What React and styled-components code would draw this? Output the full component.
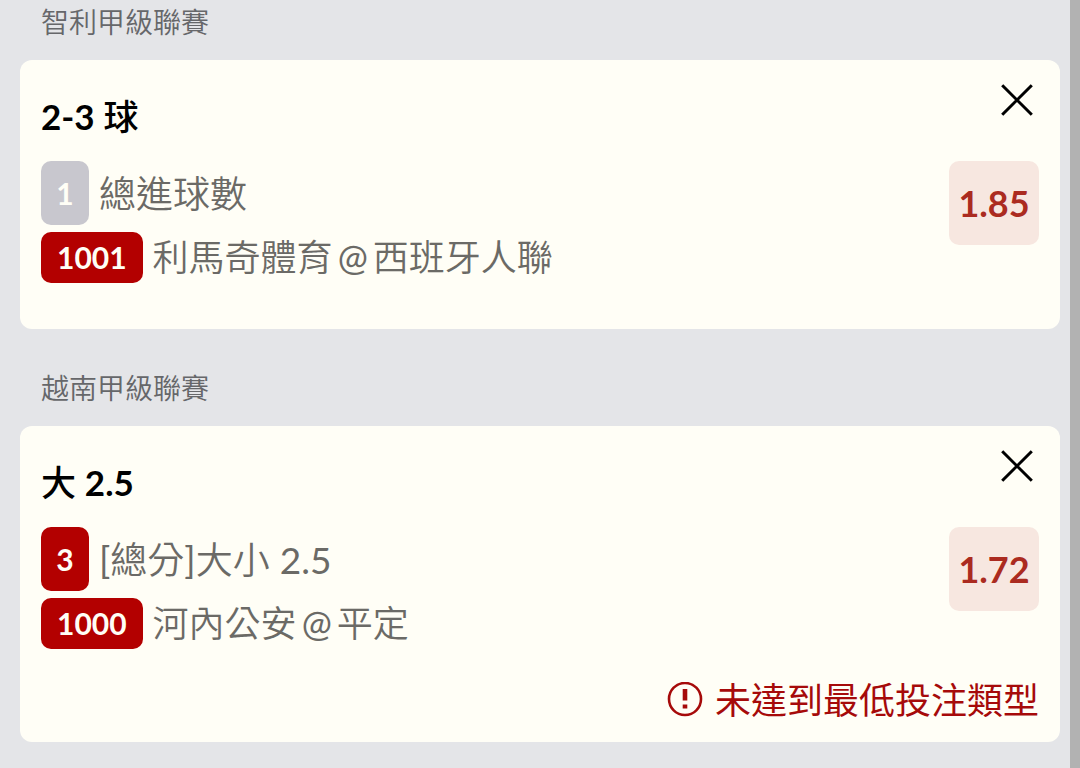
import styled, { createGlobalStyle } from 'styled-components';


const bets = [
    {
        league: '智利甲級聯賽',
        pick: '2-3 球',
        order: '1',
        market: '總進球數',
        code: '1001',
        home: '利馬奇體育',
        away: '西班牙人聯',
        odds: '1.85',
        muted: true,
    },
    {
        league: '越南甲級聯賽',
        pick: '大 2.5',
        order: '3',
        market: '[總分]大小 2.5',
        code: '1000',
        home: '河內公安',
        away: '平定',
        odds: '1.72',
        error: '未達到最低投注類型',
    },
];

// latin runs are set heavier than the chinese text around them
const withLatin = (text, Latin) =>
    text.split(/([\d.[\]-]+)/).map((part, i) => (i % 2 ? <Latin key={i}>{part}</Latin> : part));

const BetCard = ({ bet }) => {
    return (
        <Card>
            <CardHeader>
                <Pick>{withLatin(bet.pick, PickLatin)}</Pick>
                <CloseButton type="button" aria-label="Remove">
                    <svg width="32" height="32" viewBox="0 0 32 32" fill="none" stroke="currentColor" strokeWidth="3">
                        <path d="M1.2 1.2 30.8 30.8M30.8 1.2 1.2 30.8"/>
                    </svg>
                </CloseButton>
            </CardHeader>
            <CardBody>
                <Lines>
                    <Line>
                        <Badge $tall $muted={bet.muted}>{bet.order}</Badge>
                        <Market>{withLatin(bet.market, MarketLatin)}</Market>
                    </Line>
                    <Line>
                        <Badge>{bet.code}</Badge>
                        <Match>
                            <span>{bet.home}</span>
                            <At>@</At>
                            <span>{bet.away}</span>
                        </Match>
                    </Line>
                </Lines>
                <Odds>{bet.odds}</Odds>
            </CardBody>
            <CardFooter>
                {bet.error && (
                    <ErrorMessage>
                        <svg width="36" height="36" viewBox="0 0 36 36" fill="none" stroke="currentColor">
                            <circle cx="18" cy="17" r="16" strokeWidth="2.6"/>
                            <path d="M18 7V18.5M18 22.5V26.5" strokeWidth="4.6"/>
                        </svg>
                        {bet.error}
                    </ErrorMessage>
                )}
            </CardFooter>
        </Card>
    );
};

const App = () => {
    return (
        <Page>
            <GlobalStyle/>
            <BetList>
                {bets.map((bet) => (
                    <section key={bet.code}>
                        <League>{bet.league}</League>
                        <BetCard bet={bet}/>
                    </section>
                ))}
            </BetList>
            <ScrollTrack/>
        </Page>
    );
};


const GlobalStyle = createGlobalStyle`
    * {
        box-sizing: border-box;
    }

    body {
        margin: 0;
        background: #e4e5e8;
        color: #000;
        font-family: Lato, "Noto Sans CJK TC", sans-serif;
    }
`;

const Page = styled.div`
    display: flex;
    min-height: 100vh;
`;

const BetList = styled.main`
    flex: 1;
    min-width: 0;
    display: flex;
    flex-direction: column;
    gap: 39px;
    padding: 2px 10px 24px 20px;
`;

const ScrollTrack = styled.div`
    width: 10px;
    background: #b2b2b2;
`;

const League = styled.h2`
    margin: 0 0 18px;
    padding: 0 21px;
    color: #66676a;
    font-size: 28px;
    font-weight: 350;
    line-height: 40px;
`;

const Card = styled.article`
    padding: 24px 21px 22px;
    border-radius: 12px;
    background: #fffef6;
`;

const CardHeader = styled.header`
    display: flex;
    justify-content: space-between;
    align-items: flex-start;
    margin-bottom: 13px;
`;

const Pick = styled.h3`
    margin: 0;
    font-size: 35px;
    font-weight: 500;
    line-height: 64px;
`;

const PickLatin = styled.span`
    font-weight: 700;
`;

const CloseButton = styled.button`
    display: flex;
    justify-content: center;
    width: 44px;
    padding: 0;
    border: 0;
    background: none;
    color: #000;
    cursor: pointer;
`;

const CardBody = styled.div`
    display: flex;
    justify-content: space-between;
    align-items: flex-start;
`;

const Lines = styled.div`
    display: flex;
    flex-direction: column;
    gap: 7px;
`;

const Line = styled.div`
    display: flex;
    align-items: center;
    gap: 10px;
`;

const Badge = styled.span`
    min-width: 48px;
    padding: 0 ${(props) => (props.$tall ? '15px' : '16px')};
    border-radius: 10px;
    background: ${(props) => (props.$muted ? '#c8c7ce' : '#b30000')};
    color: #fffef6;
    font-size: 30px;
    font-weight: 700;
    line-height: ${(props) => (props.$tall ? '64px' : '51px')};
    text-align: center;
`;

const Market = styled.span`
    color: #6b6a66;
    font-size: 37px;
    font-weight: 350;
    line-height: 51px;
`;

const MarketLatin = styled.span`
    font-weight: 400;
`;

const Match = styled(Market)`
    display: flex;
    gap: 5px;
    font-size: 36px;
`;

const At = styled.span`
    font-weight: 400;
`;

const Odds = styled.div`
    min-width: 90px;
    border-radius: 10px;
    background: #f7e7e0;
    color: #ab2b20;
    font-size: 36px;
    font-weight: 700;
    line-height: 84px;
    text-align: center;
`;

const CardFooter = styled.footer`
    display: flex;
    justify-content: flex-end;
    margin-top: 24px;
`;

const ErrorMessage = styled.p`
    display: flex;
    align-items: center;
    gap: 12px;
    margin: 0;
    padding-top: 7px;
    color: #a60a0a;
    font-size: 36px;
    font-weight: 400;
    line-height: 40px;
`;

export default App;
